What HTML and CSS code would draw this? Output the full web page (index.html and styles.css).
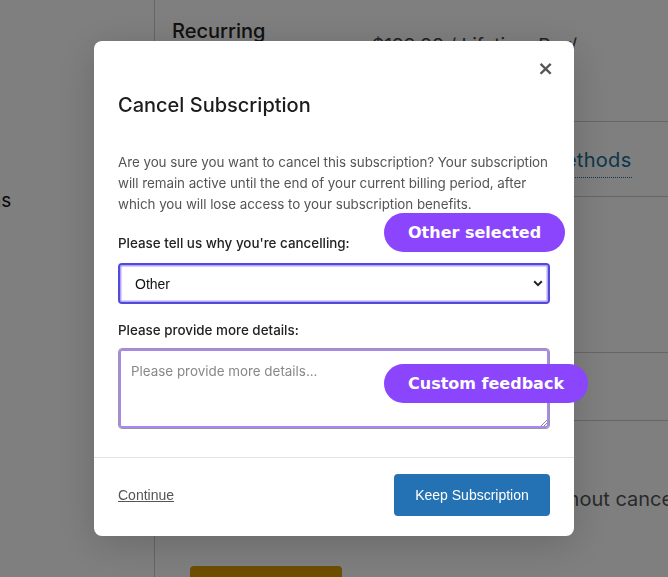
FILE: index.html
```
<!DOCTYPE html>
<html lang="en">

<head>
    <meta charset="UTF-8">
    <meta name="viewport" content="width=device-width, initial-scale=1.0">
    <title>Cancel Subscription</title>
    <link rel="stylesheet" href="styles.css">
</head>

<body>
    <div class="page">
        <aside class="sidebar">
            <div class="nav_item">My Subscriptions</div>
        </aside>
        <main class="main">
            <div class="row row_first">
                <div class="row_label">Recurring</div>
                <div class="row_value">$199.99 / Lifetime Pay/</div>
            </div>
            <div class="row row_link">
                <div class="row_label">Payment</div>
                <div class="row_value"><a href="#">Manage Payment Methods</a></div>
            </div>
            <div class="row row_tall"></div>
            <div class="row row_short"></div>
            <div class="row row_last">
                <div class="row_label"></div>
                <div class="row_value">Pause your plans without cancelling</div>
            </div>
            <div class="yellow_btn"></div>
        </main>
    </div>

    <div class="overlay">
        <div class="modal">
            <div class="modal_body">
                <div class="close">&times;</div>
                <h2 class="title">Cancel Subscription</h2>
                <p class="desc">Are you sure you want to cancel this subscription? Your subscription will remain active until the end of your current billing period, after which you will lose access to your subscription benefits.</p>
                <label class="field_label">Please tell us why you're cancelling:</label>
                <div class="select_box">
                    <span>Other</span>
                    <svg width="10" height="7" viewBox="0 0 10 7"><path d="M1.2 1.3 5 5.1 8.8 1.3" fill="none" stroke="#222" stroke-width="2"/></svg>
                </div>
                <label class="field_label">Please provide more details:</label>
                <div class="textarea_box">
                    <span class="placeholder">Please provide more details...</span>
                    <svg class="grip" width="7" height="7" viewBox="0 0 7 7"><path d="M7 1 1 7M7 4 4 7" stroke="#888" stroke-width="1"/></svg>
                </div>
            </div>
            <div class="modal_foot">
                <a href="#" class="continue">Continue</a>
                <button class="keep_btn">Keep Subscription</button>
            </div>
            <div class="badge badge_select">Other selected</div>
            <div class="badge badge_text">Custom feedback</div>
        </div>
    </div>
</body>

</html>
```

FILE: styles.css
```
* {
    margin: 0;
    padding: 0;
    box-sizing: border-box;
}

a {
    text-decoration: none;
}

body {
    width: 668px;
    height: 577px;
    overflow: hidden;
    background-color: #fff;
    font-family: Inter, "Noto Sans", sans-serif;
    color: #222;
}

.page {
    display: flex;
    height: 577px;
}

.sidebar {
    width: 155px;
    border-right: 1px solid #ccc;
    overflow: hidden;
    padding-top: 189px;
}

.sidebar .nav_item {
    font-size: 19px;
    color: #111;
    white-space: nowrap;
    margin-left: -145px;
}

.main {
    flex: 1;
    padding-left: 17px;
    overflow: hidden;
}

.row {
    display: flex;
    border-bottom: 1px solid #ccc;
    font-size: 20px;
}

.row_label {
    width: 200px;
    flex-shrink: 0;
    font-weight: 500;
    color: #222;
}

.row_value {
    white-space: nowrap;
    color: #444;
}

.row_first {
    height: 122px;
    padding-top: 19px;
}

.row_first .row_value {
    padding-top: 15px;
    font-size: 19px;
}

.row_link {
    height: 75px;
    padding-top: 26px;
}

.row_link a {
    color: #176c96;
    border-bottom: 1px dotted #176c96;
    padding-bottom: 5px;
    letter-spacing: 0.3px;
}

.row_tall {
    height: 156px;
}

.row_short {
    height: 68px;
}

.row_last {
    border-bottom: none;
    height: 145px;
    padding-top: 66px;
}

.row_last .row_value {
    color: #555;
}

.yellow_btn {
    margin-left: 18px;
    width: 152px;
    height: 40px;
    border-radius: 4px;
    background-color: #d89e00;
}

.overlay {
    position: fixed;
    left: 0;
    top: 0;
    width: 668px;
    height: 577px;
    background-color: rgba(0, 0, 0, 0.5);
    display: flex;
    align-items: center;
    justify-content: center;
}

.modal {
    position: relative;
    width: 480px;
    height: 495px;
    background-color: #fff;
    border-radius: 8px;
    box-shadow: 0 8px 40px rgba(0, 0, 0, 0.18);
    display: flex;
    flex-direction: column;
}

.modal_body {
    padding: 18px 24px 0;
    height: 417px;
    border-bottom: 1px solid #e3e3e3;
}

.close {
    text-align: right;
    font-family: "DejaVu Sans", sans-serif;
    font-weight: bold;
    font-size: 20px;
    line-height: 18px;
    color: #555;
    margin-right: -4px;
}

.title {
    margin-top: 14px;
    font-size: 20px;
    font-weight: 500;
    color: #1c1c1c;
    line-height: 28px;
}

.desc {
    margin-top: 33px;
    font-size: 13.4px;
    line-height: 21px;
    color: #555;
    letter-spacing: -0.05px;
}

.field_label {
    display: block;
    margin-top: 18px;
    font-size: 13.4px;
    line-height: 20px;
    color: #222;
    font-weight: 500;
}

.select_box {
    margin-top: 10px;
    height: 41px;
    border: 2px solid #4f4bdb;
    border-radius: 4px;
    box-shadow: inset 0 0 0 1.5px #b9a2fb;
    display: flex;
    align-items: center;
    justify-content: space-between;
    padding: 0 5px 0 15px;
    font-family: "Liberation Sans", Arial, sans-serif;
    font-size: 14px;
    color: #111;
}

.select_box+.field_label {
    margin-top: 16px;
}

.textarea_box {
    position: relative;
    margin-top: 8px;
    height: 81px;
    border: 1px solid #999;
    border-radius: 4px;
    box-shadow: inset 0 0 0 2px #a985f5;
    padding: 11px 12px;
}

.placeholder {
    font-size: 13.4px;
    color: #888;
}

.grip {
    position: absolute;
    right: 2px;
    bottom: 2px;
}

.modal_foot {
    display: flex;
    align-items: center;
    justify-content: space-between;
    padding: 16px 24px 0;
}

.continue {
    font-family: "Liberation Sans", Arial, sans-serif;
    font-size: 14px;
    color: #555;
    text-decoration: underline;
}

.keep_btn {
    width: 156px;
    height: 42px;
    border: none;
    border-radius: 4px;
    background-color: #2472b3;
    color: #fff;
    font-family: "Liberation Sans", Arial, sans-serif;
    font-size: 14px;
    cursor: pointer;
}

.badge {
    position: absolute;
    left: 290px;
    height: 39px;
    padding: 0 24px;
    border-radius: 20px;
    background-color: #8b45fd;
    color: #fff;
    font-family: "DejaVu Sans", sans-serif;
    font-weight: bold;
    font-size: 16px;
    display: flex;
    align-items: center;
    white-space: nowrap;
}

.badge_select {
    top: 172px;
}

.badge_text {
    top: 323px;
}
```
